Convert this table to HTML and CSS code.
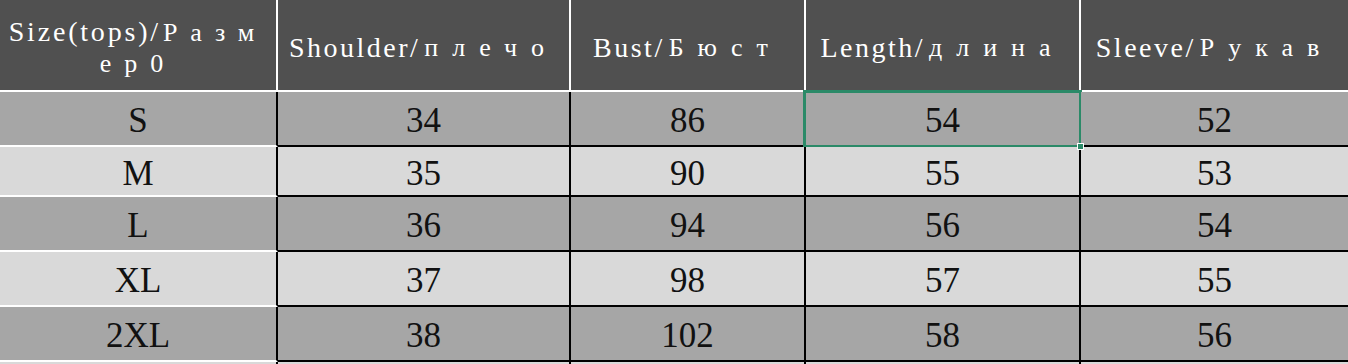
FILE: index.html
```html
<!DOCTYPE html>
<html>
<head>
<meta charset="utf-8">
<link rel="stylesheet" href="styles.css">
</head>
<body>
<div class="sheet">
  <div class="hd first"><span class="lat">Size(tops)/</span><span class="cyr">Разм<br>ер0</span></div>
  <div class="hd"><span class="lat">Shoulder/</span><span class="cyr">плечо</span></div>
  <div class="hd"><span class="lat">Bust/</span><span class="cyr">Бюст</span></div>
  <div class="hd"><span class="lat">Length/</span><span class="cyr">длина</span></div>
  <div class="hd last"><span class="lat">Sleeve/</span><span class="cyr">Рукав</span></div>

  <div class="c size dark">S</div>
  <div class="c dark">34</div>
  <div class="c dark">86</div>
  <div class="c dark selected">54</div>
  <div class="c dark last">52</div>

  <div class="c size light">M</div>
  <div class="c light">35</div>
  <div class="c light">90</div>
  <div class="c light">55</div>
  <div class="c light last">53</div>

  <div class="c size dark">L</div>
  <div class="c dark">36</div>
  <div class="c dark">94</div>
  <div class="c dark">56</div>
  <div class="c dark last">54</div>

  <div class="c size light">XL</div>
  <div class="c light">37</div>
  <div class="c light">98</div>
  <div class="c light">57</div>
  <div class="c light last">55</div>

  <div class="c size dark">2XL</div>
  <div class="c dark">38</div>
  <div class="c dark">102</div>
  <div class="c dark">58</div>
  <div class="c dark last">56</div>

  <div class="c size light"></div>
  <div class="c light"></div>
  <div class="c light"></div>
  <div class="c light"></div>
  <div class="c light last"></div>
</div>
</body>
</html>
```

FILE: styles.css
```css
html, body {
  margin: 0;
  padding: 0;
  background: #ffffff;
  overflow: hidden;
}

.sheet {
  display: grid;
  grid-template-columns: 278px 293px 235px 275px 267px;
  grid-template-rows: 92px 55px 50px 55px 55px 55px 55px;
  width: 1348px;
  font-family: "Liberation Serif", "Times New Roman", serif;
}

.hd {
  background: #505050;
  color: #ffffff;
  border-right: 2px solid #ffffff;
  border-bottom: 2px solid #ffffff;
  box-sizing: border-box;
  display: flex;
  align-items: center;
  justify-content: center;
  text-align: center;
  font-size: 28px;
  white-space: nowrap;
  padding-top: 6px;
}

.hd.first {
  display: block;
  padding-top: 17px;
  line-height: 30px;
}

.hd.last {
  border-right: none;
}

.lat {
  letter-spacing: 2.5px;
}

.cyr {
  font-size: 26px;
  letter-spacing: 14px;
  margin-left: 4px;
}

.hd.first .lat {
  letter-spacing: 2.8px;
}

.hd.first .cyr {
  letter-spacing: 13px;
  margin-left: 2px;
}

.c {
  box-sizing: border-box;
  border-right: 2px solid #000000;
  border-bottom: 2px solid #000000;
  display: flex;
  align-items: center;
  justify-content: center;
  font-size: 35px;
  color: #111111;
  padding-top: 5px;
  position: relative;
}

.c.last {
  border-right: none;
}

.c.size {
  border-bottom-color: #ffffff;
}

.dark {
  background: #a6a6a6;
}

.light {
  background: #d9d9d9;
}

.selected::after {
  content: "";
  position: absolute;
  left: -3px;
  top: -2px;
  right: -3px;
  bottom: -3px;
  border: 3px solid #2b8a68;
  pointer-events: none;
}

.selected::before {
  content: "";
  position: absolute;
  right: -5px;
  bottom: -5px;
  width: 5px;
  height: 5px;
  background: #2b8a68;
  border: 1px solid #ffffff;
  z-index: 2;
}
```
